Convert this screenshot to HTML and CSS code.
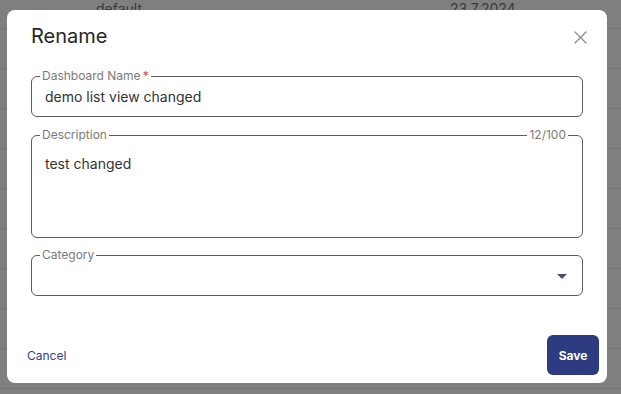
FILE: index.html
```html
<!DOCTYPE html>
<html lang="en">
<head>
<meta charset="utf-8">
<title>Rename</title>
<link rel="stylesheet" href="styles.css">
</head>
<body>
<div class="table">
  <div class="row"><span class="cell-name">default</span><span class="cell-date">23.7.2024</span></div>
  <div class="row"></div>
  <div class="row"></div>
  <div class="row"></div>
  <div class="row"></div>
  <div class="row"></div>
  <div class="row"></div>
  <div class="row"></div>
  <div class="row"></div>
  <div class="row"></div>
</div>

<div class="modal" role="dialog">
  <div class="modal-header">
    <h2 class="modal-title">Rename</h2>
    <button class="close-btn" aria-label="Close">
      <svg width="13" height="13" viewBox="0 0 13 13"><path d="M1 1 L12 12 M12 1 L1 12" stroke="#8f8f8f" stroke-width="1.4" fill="none" stroke-linecap="round"/></svg>
    </button>
  </div>

  <fieldset class="field field-name">
    <legend class="legend">Dashboard Name<span class="req">&thinsp;*</span></legend>
    <div class="field-value">demo list view changed</div>
  </fieldset>

  <fieldset class="field field-desc">
    <legend class="legend legend-wide"><span class="legend-text">Description</span><span class="legend-line"></span><span class="legend-text">12/100</span></legend>
    <div class="field-value field-value-area">test changed</div>
  </fieldset>

  <fieldset class="field field-cat">
    <legend class="legend">Category</legend>
    <div class="field-value field-select">
      <span></span>
      <svg width="10" height="5" viewBox="0 0 10 5"><path d="M0 0 L10 0 L5 5 Z" fill="#4a4f6e"/></svg>
    </div>
  </fieldset>

  <div class="modal-footer">
    <button class="btn-cancel">Cancel</button>
    <button class="btn-save">Save</button>
  </div>
</div>
</body>
</html>
```

FILE: styles.css
```css
* { box-sizing: border-box; }

html, body {
  margin: 0;
  padding: 0;
}

body {
  width: 621px;
  height: 394px;
  overflow: hidden;
  background: #7f7f7f;
  font-family: Inter, "Noto Sans", sans-serif;
  position: relative;
}

.table {
  margin-top: -11px;
}

.row {
  height: 40px;
  border-bottom: 1px solid #767676;
  display: grid;
  grid-template-columns: 96px 354px 1fr;
  align-items: center;
  font-size: 14px;
  color: #3a3a3a;
}

.cell-name { grid-column: 2; }
.cell-date { grid-column: 3; }

.modal {
  position: absolute;
  left: 7px;
  top: 10px;
  width: 600px;
  height: 373px;
  background: #fff;
  border-radius: 8px;
  padding: 14px 24px 0 24px;
  display: flex;
  flex-direction: column;
}

.modal-header {
  display: flex;
  align-items: center;
  justify-content: space-between;
  height: 24px;
}

.modal-title {
  margin: 0;
  font-size: 20px;
  line-height: 24px;
  font-weight: 400;
  color: #262626;
}

.close-btn {
  border: 0;
  background: none;
  padding: 0;
  margin-right: -4px;
  margin-top: 2px;
  width: 13px;
  height: 13px;
  display: flex;
}

.field {
  margin: 0;
  padding: 0 8px;
  border: 1px solid #5c5c5c;
  border-radius: 6px;
  min-width: 0;
}

.field-name { margin-top: 21px; }
.field-desc { margin-top: 11px; padding-right: 14px; }
.field-cat { margin-top: 10px; }

.legend {
  padding: 0 2px;
  font-size: 12px;
  line-height: 14px;
  color: #7a7a7a;
}

.req { color: #e53935; }

.legend-wide {
  width: 100%;
  display: flex;
  align-items: center;
  padding: 0;
}

.legend-text { padding: 0 2px; }

.legend-line {
  flex: 1;
  height: 1px;
  background: #5c5c5c;
  margin-top: 1px;
}

.field-value {
  padding: 4px 5px 9px 5px;
  font-size: 14px;
  line-height: 20px;
  color: #333;
  height: 33px;
}

.field-value-area {
  padding-top: 12px;
  height: 95px;
}

.field-select {
  display: flex;
  align-items: center;
  justify-content: space-between;
  padding-right: 7px;
}

.modal-footer {
  margin-top: auto;
  margin-left: -4px;
  margin-right: -16px;
  padding-bottom: 8px;
  display: flex;
  align-items: center;
  justify-content: space-between;
}

.btn-cancel {
  border: 0;
  background: none;
  padding: 0;
  font-family: Inter, "Noto Sans", sans-serif;
  font-size: 12px;
  color: #34418c;
}

.btn-save {
  border: 0;
  background: #2d3b80;
  color: #fff;
  font-family: Inter, "Noto Sans", sans-serif;
  font-size: 12px;
  font-weight: 700;
  width: 52px;
  height: 40px;
  border-radius: 6px;
  padding: 0;
}
```
